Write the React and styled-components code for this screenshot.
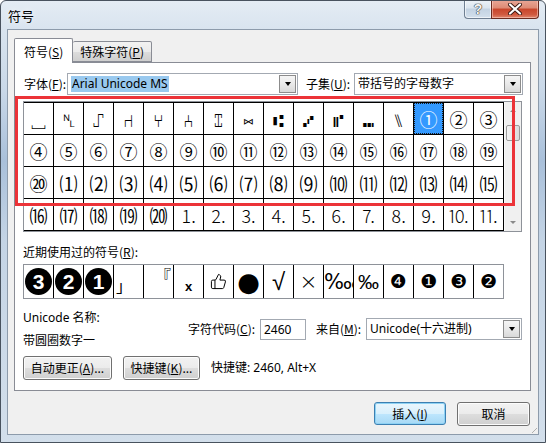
import React from "react";
import styled, { createGlobalStyle } from "styled-components";
import { ThumbsUp } from "lucide-react";

const GlobalStyle = createGlobalStyle`
  html, body { margin: 0; padding: 0; background: #fff; }
  body {
    font-family: "Noto Sans", "Noto Sans CJK SC", sans-serif;
    font-size: 12px;
    color: #000;
  }
  * { box-sizing: border-box; }
`;

const rows = [
  ["␣", "␤", "⑀", "⑁", "⑂", "⑃", "⑄", "⑅", "⑆", "⑇", "⑈", "⑉", "⑊", "①", "②", "③"],
  ["④", "⑤", "⑥", "⑦", "⑧", "⑨", "⑩", "⑪", "⑫", "⑬", "⑭", "⑮", "⑯", "⑰", "⑱", "⑲"],
  ["⑳", "⑴", "⑵", "⑶", "⑷", "⑸", "⑹", "⑺", "⑻", "⑼", "⑽", "⑾", "⑿", "⒀", "⒁", "⒂"],
  ["⒃", "⒄", "⒅", "⒆", "⒇", "⒈", "⒉", "⒊", "⒋", "⒌", "⒍", "⒎", "⒏", "⒐", "⒑", "⒒"],
];

const App = () => {
  return (
    <>
      <GlobalStyle />
      <Window>
        <TitleBar>
          <Title>符号</Title>
          <CaptionButtons>
            <HelpButton>?</HelpButton>
            <CloseButton>
              <svg width="14" height="12" viewBox="0 0 14 12">
                <path d="M2 1.5 L12 10.5 M12 1.5 L2 10.5" stroke="#3b1a14" strokeWidth="4" strokeLinecap="round" />
                <path d="M2 1.5 L12 10.5 M12 1.5 L2 10.5" stroke="#ffffff" strokeWidth="2.2" strokeLinecap="round" />
              </svg>
            </CloseButton>
          </CaptionButtons>
        </TitleBar>

        <Client>
          <TabStrip>
            <Tab $active>符号(<u>S</u>)</Tab>
            <Tab>特殊字符(<u>P</u>)</Tab>
          </TabStrip>

          <Panel>
            <FontRow>
              <FieldLabel $w={43}>字体(<u>F</u>):</FieldLabel>
              <Combo $w={231}>
                <ComboText><Highlight>Arial Unicode MS</Highlight></ComboText>
                <DropButton><Arrow /></DropButton>
              </Combo>
              <FieldLabel $w={48} style={{ marginLeft: 8 }}>子集(<u>U</u>):</FieldLabel>
              <Combo $w={169}>
                <ComboText>带括号的字母数字</ComboText>
                <DropButton><Arrow /></DropButton>
              </Combo>
            </FontRow>

            <GridFrame>
              <CharGrid>
                {rows.flat().map((ch, i) => (
                  <Cell key={i} $selected={i === 13} $plain={i >= 53}>{ch}</Cell>
                ))}
              </CharGrid>
              <ScrollBar>
                <ScrollArrow><UpTri /></ScrollArrow>
                <Thumb />
                <ScrollTrack />
                <ScrollArrow><DownTri /></ScrollArrow>
              </ScrollBar>
            </GridFrame>

            <SectionLabel>近期使用过的符号(<u>R</u>):</SectionLabel>
            <RecentRow>
              <RecentCell><BigBadge>3</BigBadge></RecentCell>
              <RecentCell><BigBadge>2</BigBadge></RecentCell>
              <RecentCell><BigBadge>1</BigBadge></RecentCell>
              <RecentCell $justify="flex-start" $align="flex-end" $size={16} style={{ paddingLeft: 2, paddingBottom: 3 }}>」</RecentCell>
              <RecentCell $justify="flex-end" $align="flex-start" $size={16} style={{ paddingRight: 2, paddingTop: 4 }}>『</RecentCell>
              <RecentCell $align="flex-end" $size={13} $bold style={{ paddingBottom: 5 }}>x</RecentCell>
              <RecentCell><ThumbsUp size={17} strokeWidth={1.4} /></RecentCell>
              <RecentCell $size={26} $font='"DejaVu Sans", sans-serif'>●</RecentCell>
              <RecentCell $size={24}>√</RecentCell>
              <RecentCell $size={22} $font='"DejaVu Sans", sans-serif' $light>×</RecentCell>
              <RecentCell $justify="flex-start" $size={21}><Clip>‱</Clip></RecentCell>
              <RecentCell $size={21}>‰</RecentCell>
              <RecentCell $size={19} $font='"DejaVu Sans", sans-serif'>❹</RecentCell>
              <RecentCell $size={19} $font='"DejaVu Sans", sans-serif'>❶</RecentCell>
              <RecentCell $size={19} $font='"DejaVu Sans", sans-serif'>❸</RecentCell>
              <RecentCell $size={19} $font='"DejaVu Sans", sans-serif'>❷</RecentCell>
            </RecentRow>

            <InfoRow>
              <NameColumn>
                <Line>Unicode 名称:</Line>
                <Line>带圆圈数字一</Line>
              </NameColumn>
              <CodeGroup>
                <FieldLabel $w={72}>字符代码(<u>C</u>):</FieldLabel>
                <TextBox $w={46}>2460</TextBox>
                <FieldLabel $w={50} style={{ marginLeft: 10 }}>来自(<u>M</u>):</FieldLabel>
                <Combo $w={156}>
                  <ComboText>Unicode(十六进制)</ComboText>
                  <DropButton><Arrow /></DropButton>
                </Combo>
              </CodeGroup>
            </InfoRow>

            <ButtonRow>
              <Button $w={89}>自动更正(<u>A</u>)...</Button>
              <Button $w={77}>快捷键(<u>K</u>)...</Button>
              <Line>快捷键: 2460, Alt+X</Line>
            </ButtonRow>

            <Annotation />
          </Panel>

          <Footer>
            <Button $w={72} $default>插入(<u>I</u>)</Button>
            <Button $w={73}>取消</Button>
          </Footer>
          <Grip />
        </Client>
      </Window>
    </>
  );
};

export default App;

const Window = styled.div`
  width: 546px;
  height: 443px;
  display: flex;
  flex-direction: column;
  border: 1px solid #48525e;
  border-radius: 6px 6px 0 0;
  overflow: hidden;
  background: linear-gradient(180deg, #e4ecf4 0px, #d9e4ef 28px, #c9d8e8 90px, #a9c0da 160px, #c4d4e5 240px, #d3dfeb 443px);
`;

const TitleBar = styled.div`
  height: 28px;
  display: flex;
  align-items: flex-start;
  padding-left: 7px;
  flex-shrink: 0;
`;

const Title = styled.div`
  margin-top: 6px;
  font-family: "Noto Sans CJK SC", sans-serif;
  font-size: 13px;
  line-height: 17px;
  color: #000;
  text-shadow: 0 0 6px rgba(255, 255, 255, 0.9);
`;

const CaptionButtons = styled.div`
  margin-left: auto;
  margin-right: 6px;
  margin-top: -1px;
  display: flex;
`;

const HelpButton = styled.div`
  width: 27px;
  height: 19px;
  border: 1px solid #6f7f92;
  border-right: none;
  border-top: none;
  border-radius: 0 0 0 4px;
  background: linear-gradient(180deg, #eef3f8 0%, #dbe5ef 45%, #c3d2e2 50%, #d3e0ec 100%);
  box-shadow: inset 0 0 0 1px rgba(255, 255, 255, 0.6);
  display: flex;
  align-items: center;
  justify-content: center;
  font-family: "Liberation Sans", sans-serif;
  font-weight: bold;
  font-size: 14px;
  color: #f4f4f4;
  text-shadow: 0 0 1px #333, 0 0 1px #333, 0 0 1px #333;
`;

const CloseButton = styled.div`
  width: 48px;
  height: 19px;
  border: 1px solid #6b2b20;
  border-top: none;
  border-radius: 0 0 4px 0;
  background: linear-gradient(180deg, #e9a898 0%, #dd8a74 45%, #c8452b 50%, #d0593f 80%, #e0866e 100%);
  box-shadow: inset 0 0 0 1px rgba(255, 220, 210, 0.5);
  display: flex;
  align-items: center;
  justify-content: center;
`;

const Client = styled.div`
  flex: 1;
  margin: 0 6px 7px 6px;
  border: 1px solid #8d9bab;
  background: #f0f0f0;
  display: flex;
  flex-direction: column;
  position: relative;
`;

const TabStrip = styled.div`
  display: flex;
  align-items: flex-end;
  padding: 8px 0 0 6px;
  position: relative;
  z-index: 1;
`;

const Tab = styled.div`
  height: ${(p) => (p.$active ? 25 : 21)}px;
  padding: ${(p) => (p.$active ? "1px 9px 0" : "1px 7px 0")};
  margin-bottom: ${(p) => (p.$active ? -1 : 0)}px;
  border: 1px solid #898c95;
  border-bottom: ${(p) => (p.$active ? "none" : "1px solid #898c95")};
  border-left: ${(p) => (p.$active ? "1px solid #898c95" : "none")};
  border-radius: 2px 2px 0 0;
  background: ${(p) => (p.$active ? "#ffffff" : "linear-gradient(180deg, #f2f2f2 0%, #ebebeb 50%, #dddddd 51%, #cfcfcf 100%)")};
  display: flex;
  align-items: center;
  font-family: "Noto Sans CJK SC", sans-serif;
  font-size: 12px;
  line-height: 16px;
  white-space: nowrap;
`;

const Panel = styled.div`
  position: relative;
  margin-left: 6px;
  width: 517px;
  height: 329px;
  border: 1px solid #898c95;
  background: #ffffff;
  display: flex;
  flex-direction: column;
  padding-left: 8px;
`;

const FontRow = styled.div`
  display: flex;
  align-items: center;
  height: 22px;
  margin-top: 10px;
  padding-left: 1px;
`;

const FieldLabel = styled.span`
  width: ${(p) => p.$w}px;
  flex-shrink: 0;
  white-space: nowrap;
  line-height: 16px;
  font-family: "Noto Sans CJK SC", sans-serif;
  font-size: 12px;
`;

const Combo = styled.div`
  width: ${(p) => p.$w}px;
  height: 22px;
  flex-shrink: 0;
  border: 1px solid #a3a9b2;
  background: #fff;
  display: flex;
  align-items: center;
  padding: 1px;
`;

const ComboText = styled.span`
  flex: 1;
  padding-left: 2px;
  line-height: 16px;
  white-space: nowrap;
  overflow: hidden;
  font-size: 12px;
`;

const Highlight = styled.span`
  background: #99c9ef;
  padding: 1px 1px 2px;
`;

const DropButton = styled.span`
  width: 17px;
  height: 18px;
  border: 1px solid #8c8c8c;
  background: linear-gradient(180deg, #f5f5f5 0%, #e9e9e9 50%, #d9d9d9 100%);
  display: flex;
  align-items: center;
  justify-content: center;
`;

const Arrow = styled.span`
  width: 0;
  height: 0;
  border-left: 3.5px solid transparent;
  border-right: 3.5px solid transparent;
  border-top: 4px solid #000;
`;

const GridFrame = styled.div`
  margin-top: 6px;
  width: 499px;
  display: flex;
  border: 1px solid #8e9299;
`;

const CharGrid = styled.div`
  display: grid;
  grid-template-columns: repeat(16, 29px);
  grid-auto-rows: 31px;
  gap: 1px;
  background: #000;
  border-top: 1px solid #000;
  border-right: 1px solid #000;
  border-bottom: 1px solid #000;
`;

const Cell = styled.div`
  background: ${(p) => (p.$selected ? "#3399ff" : "#ffffff")};
  color: ${(p) => (p.$selected ? "#ffffff" : "#000000")};
  outline: ${(p) => (p.$selected ? "1px dotted #1a1a1a" : "none")};
  outline-offset: -1px;
  display: flex;
  align-items: center;
  justify-content: center;
  font-family: "Noto Sans CJK SC", "DejaVu Sans", sans-serif;
  font-size: 18px;
  font-weight: ${(p) => (p.$plain ? 300 : 400)};
  line-height: 1;
  overflow: hidden;
`;

const ScrollBar = styled.div`
  width: 17px;
  display: flex;
  flex-direction: column;
  background: #f0f0f0;
  border-left: 1px solid #f8f8f8;
`;

const ScrollArrow = styled.div`
  height: 17px;
  display: flex;
  align-items: center;
  justify-content: center;
`;

const UpTri = styled.span`
  width: 0;
  height: 0;
  border-left: 3px solid transparent;
  border-right: 3px solid transparent;
  border-bottom: 3px solid #8a8a8a;
`;

const DownTri = styled.span`
  width: 0;
  height: 0;
  border-left: 3px solid transparent;
  border-right: 3px solid transparent;
  border-top: 3px solid #8a8a8a;
`;

const Thumb = styled.div`
  margin: 6px 1px 0;
  height: 16px;
  border: 1px solid #9a9a9a;
  border-radius: 2px;
  background: linear-gradient(90deg, #f4f4f4 0%, #e8e8e8 50%, #dadada 100%);
`;

const ScrollTrack = styled.div`
  flex: 1;
`;

const SectionLabel = styled.div`
  margin-top: 12px;
  line-height: 16px;
  font-family: "Noto Sans CJK SC", sans-serif;
  font-size: 12px;
`;

const RecentRow = styled.div`
  margin-top: 4px;
  display: grid;
  grid-template-columns: repeat(16, 29px);
  grid-auto-rows: 33px;
  gap: 1px;
  width: 481px;
  background: #000;
  border: 1px solid #8e9299;
`;

const RecentCell = styled.div`
  background: #fff;
  display: flex;
  align-items: ${(p) => p.$align || "center"};
  justify-content: ${(p) => p.$justify || "center"};
  font-family: ${(p) => p.$font || '"Liberation Sans", "DejaVu Sans", "Noto Sans CJK SC", sans-serif'};
  font-size: ${(p) => p.$size || 18}px;
  font-weight: ${(p) => (p.$bold ? 700 : p.$light ? 300 : 400)};
  line-height: 1;
  overflow: hidden;
  white-space: nowrap;
`;

const Clip = styled.span`
  display: block;
  width: 29px;
  overflow: hidden;
`;

const BigBadge = styled.span`
  width: 27px;
  height: 27px;
  border-radius: 50%;
  background: #000;
  color: #fff;
  display: flex;
  align-items: center;
  justify-content: center;
  font-family: "Liberation Sans", sans-serif;
  font-weight: 700;
  font-size: 21px;
`;

const InfoRow = styled.div`
  display: flex;
  margin-top: 10px;
`;

const NameColumn = styled.div`
  width: 165px;
  display: flex;
  flex-direction: column;
  gap: 7px;
  padding-top: 1px;
`;

const Line = styled.span`
  line-height: 16px;
  white-space: nowrap;
  font-family: "Noto Sans", "Noto Sans CJK SC", sans-serif;
  font-size: 12px;
`;

const CodeGroup = styled.div`
  display: flex;
  align-items: center;
  margin-top: 9px;
  height: 22px;
`;

const TextBox = styled.div`
  width: ${(p) => p.$w}px;
  height: 21px;
  border: 1px solid #a3a9b2;
  background: #fff;
  padding-left: 3px;
  line-height: 19px;
  font-size: 12px;
`;

const ButtonRow = styled.div`
  display: flex;
  align-items: center;
  gap: 11px;
  margin-top: 7px;
`;

const Button = styled.div`
  width: ${(p) => p.$w}px;
  height: ${(p) => (p.$default ? 23 : 24)}px;
  flex-shrink: 0;
  border: 1px solid ${(p) => (p.$default ? "#3c7fb1" : "#707070")};
  border-radius: 3px;
  background: ${(p) =>
    p.$default
      ? "linear-gradient(180deg, #eaf6fd 0%, #d9f0fc 50%, #bee6fd 51%, #a7d9f5 100%)"
      : "linear-gradient(180deg, #f2f2f2 0%, #ebebeb 50%, #dddddd 51%, #cfcfcf 100%)"};
  box-shadow: inset 0 0 0 1px ${(p) => (p.$default ? "#8ed2f4" : "#fcfcfc")};
  display: flex;
  align-items: center;
  justify-content: center;
  font-family: "Noto Sans CJK SC", sans-serif;
  font-size: 12px;
  line-height: 16px;
  white-space: nowrap;
`;

const Footer = styled.div`
  display: flex;
  justify-content: flex-end;
  gap: 11px;
  padding: 11px 8px 0 0;
`;

const Grip = styled.div`
  position: absolute;
  right: 1px;
  bottom: 1px;
  width: 10px;
  height: 10px;
  background: repeating-linear-gradient(135deg, transparent 0 2px, #b0b0b0 2px 3px, transparent 3px 4px);
  clip-path: polygon(100% 0, 100% 100%, 0 100%);
`;

const Annotation = styled.div`
  position: absolute;
  left: 0;
  top: 33px;
  width: 500px;
  height: 110px;
  border: 3px solid #ec3338;
  pointer-events: none;
`;
